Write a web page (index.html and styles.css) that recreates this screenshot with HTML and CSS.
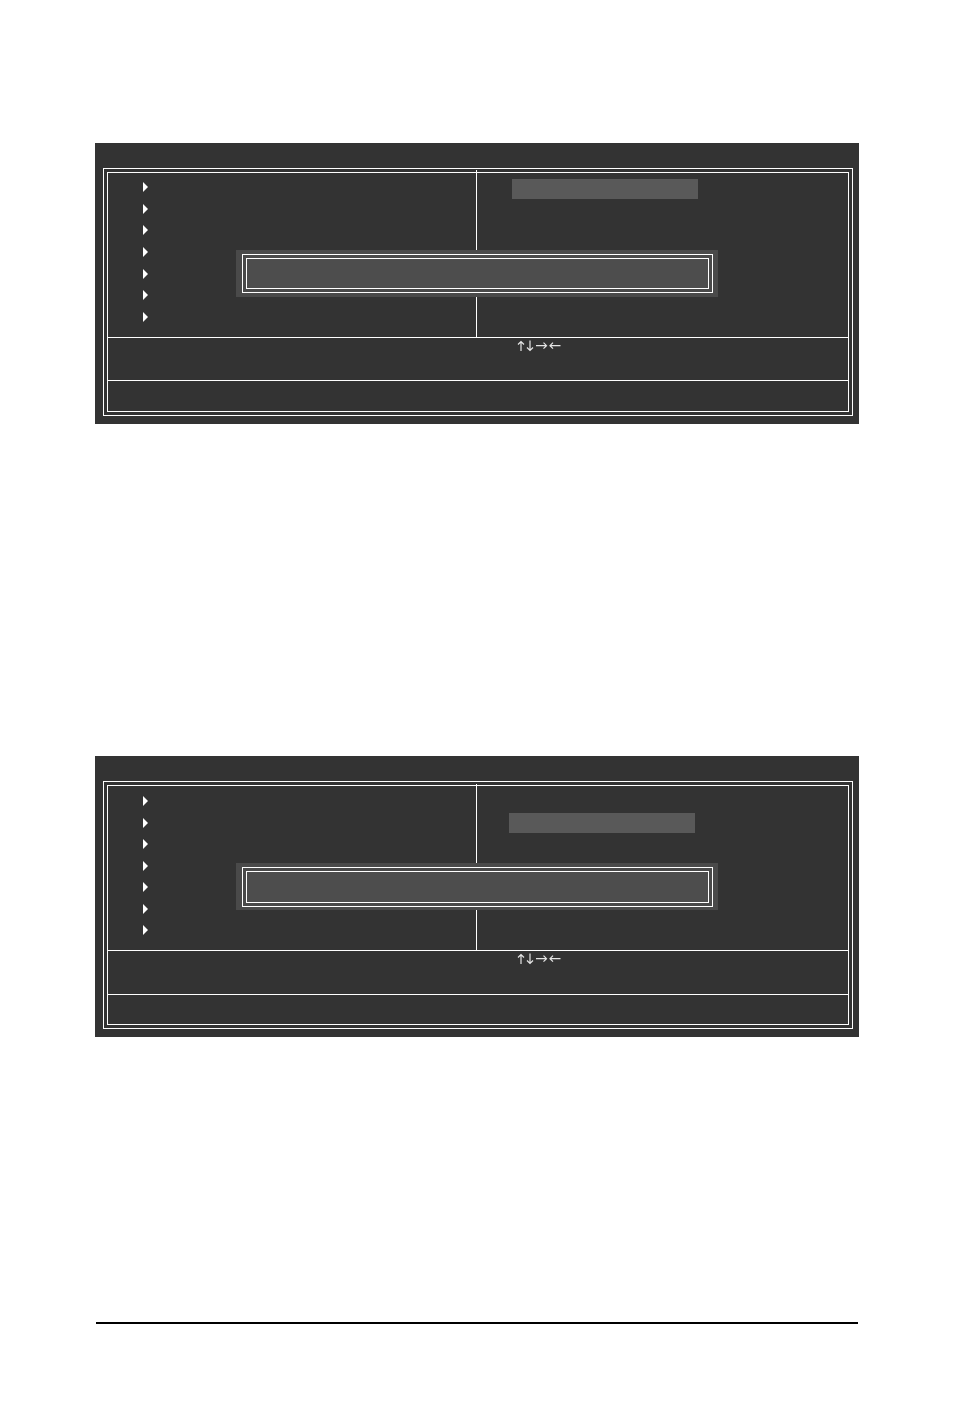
FILE: index.html
```html
<!DOCTYPE html>
<html lang="en">
<head>
    <meta charset="UTF-8">
    <meta name="viewport" content="width=device-width, initial-scale=1.0">
    <title>BIOS Setup</title>
    <link rel="stylesheet" href="styles.css">
</head>
<body>
    <main>
        <!-- First screen -->
        <section class="screen">
            <div class="frame">
                <div class="frame-inner">
                    <div class="menu">
                        <ul class="menu-left">
                            <li></li>
                            <li></li>
                            <li></li>
                            <li></li>
                            <li></li>
                            <li></li>
                            <li></li>
                        </ul>
                        <div class="menu-right">
                            <div class="selected"></div>
                        </div>
                    </div>
                    <div class="keys">
                        <svg class="arrows" width="44" height="12" viewBox="0 0 44 12" role="img" aria-label="Arrow keys">
                            <path d="M4 11V1.5M1 4.5L4 1.5L7 4.5"/>
                            <path d="M13 0.5V10.5M10 7.5L13 10.5L16 7.5"/>
                            <path d="M19 5.7H29.5M26.5 2.7L29.5 5.7L26.5 8.7"/>
                            <path d="M43.5 5.7H33M36 2.7L33 5.7L36 8.7"/>
                        </svg>
                    </div>
                    <div class="hint"></div>
                </div>
            </div>
            <div class="message">
                <div class="message-frame">
                    <div class="message-inner"></div>
                </div>
            </div>
        </section>

        <!-- Second screen -->
        <section class="screen second">
            <div class="frame">
                <div class="frame-inner">
                    <div class="menu">
                        <ul class="menu-left">
                            <li></li>
                            <li></li>
                            <li></li>
                            <li></li>
                            <li></li>
                            <li></li>
                            <li></li>
                        </ul>
                        <div class="menu-right">
                            <div class="selected"></div>
                        </div>
                    </div>
                    <div class="keys">
                        <svg class="arrows" width="44" height="12" viewBox="0 0 44 12" role="img" aria-label="Arrow keys">
                            <path d="M4 11V1.5M1 4.5L4 1.5L7 4.5"/>
                            <path d="M13 0.5V10.5M10 7.5L13 10.5L16 7.5"/>
                            <path d="M19 5.7H29.5M26.5 2.7L29.5 5.7L26.5 8.7"/>
                            <path d="M43.5 5.7H33M36 2.7L33 5.7L36 8.7"/>
                        </svg>
                    </div>
                    <div class="hint"></div>
                </div>
            </div>
            <div class="message">
                <div class="message-frame">
                    <div class="message-inner"></div>
                </div>
            </div>
        </section>
    </main>
    <hr>
</body>
</html>
```
FILE: styles.css
```css
* {
    box-sizing: border-box;
}

body {
    margin: 0;
    padding: 143px 95px 94px;
    background-color: #fff;
    font-family: Inter, sans-serif;
}

.screen {
    position: relative;
    padding: 25px 6px 8px 8px;
    background-color: #333;
    color: #fff;
}

.second {
    margin-top: 332px;
}

/* double line around the menu */
.frame {
    padding: 3px;
    border: 1px solid #fff;
}

.frame-inner {
    border: 1px solid #fff;
}

.menu {
    display: flex;
    height: 165px;
    border-bottom: 1px solid #fff;
}

.menu-left {
    display: flex;
    flex-direction: column;
    justify-content: space-between;
    width: calc(50% - 1px);
    margin: -3px 0 0;
    padding: 12px 35px 15px;
    border-right: 1px solid #fff;
    list-style: none;
}

.menu-left li {
    width: 5px;
    height: 10px;
    border: solid transparent;
    border-width: 5px 0 5px 5px;
    border-left-color: #fff;
}

.menu-right {
    flex: 1;
    padding: 6px 35px;
}

.selected {
    width: 186px;
    height: 20px;
    background-color: #595959;
}

.keys {
    height: 43px;
    padding: 2px 0 0 409px;
    border-bottom: 1px solid #fff;
}

.arrows {
    display: block;
    fill: none;
    stroke: #e6e6e6;
    stroke-width: 1.2;
}

.hint {
    height: 30px;
}

/* box over the middle of the menu */
.message {
    position: absolute;
    top: 107px;
    left: 141px;
    right: 141px;
    padding: 4px 5px 4px 6px;
    background-color: #4a4a4a;
}

.message-frame {
    padding: 3px;
    border: 1px solid #fff;
}

.message-inner {
    height: 31px;
    border: 1px solid #fff;
    background-color: #4d4d4d;
}

/* second screen differences */
.second .menu-left {
    margin-top: -2px;
}

.second .menu-right {
    padding: 27px 32px;
}

.second .keys {
    height: 44px;
}

.second .hint {
    height: 29px;
}

.second .message {
    padding-bottom: 3px;
}

.second .message-inner {
    height: 32px;
}

hr {
    height: 2px;
    margin: 285px 1px 0;
    border: none;
    background-color: #000;
}
```
